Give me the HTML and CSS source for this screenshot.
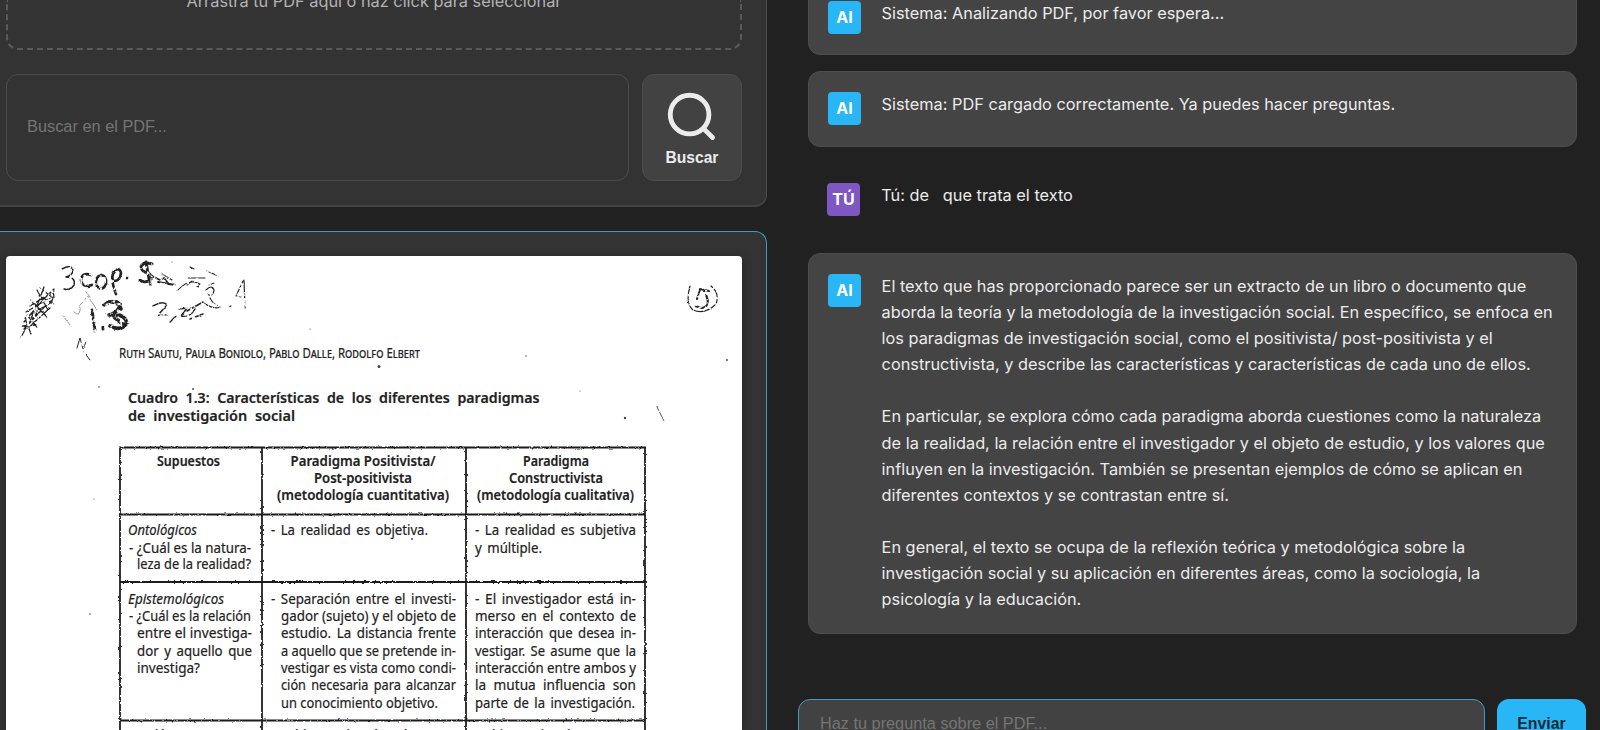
FILE: index.html
```html
<!DOCTYPE html>
<html lang="es">
<head>
<meta charset="utf-8">
<title>Asistente PDF</title>
<link rel="stylesheet" href="styles.css">
</head>
<body>
<div class="app">
  <section class="left">
    <div class="panel tools">
      <div class="dropzone"><p class="drop-text">Arrastra tu PDF aquí o haz click para seleccionar</p></div>
      <div class="search-row">
        <div class="search-input"><span class="search-ph">Buscar en el PDF...</span></div>
        <button class="search-btn">
          <svg class="search-icon" viewBox="0 0 24 24"><circle cx="11" cy="11" r="8"/><path d="M20.5 20.5 16.9 16.9"/></svg>
          <span>Buscar</span>
        </button>
      </div>
    </div>
    <div class="panel viewer">
      <div class="page">
        <svg class="scan" viewBox="6 256 736 474" preserveAspectRatio="xMidYMin slice">
          <defs>
            <filter id="rough" filterUnits="userSpaceOnUse" x="0" y="250" width="750" height="490">
              <feTurbulence type="fractalNoise" baseFrequency="0.35" numOctaves="2" seed="4" result="n"/>
              <feDisplacementMap in="SourceGraphic" in2="n" scale="2.6" xChannelSelector="R" yChannelSelector="G"/>
            </filter>
            <filter id="pencil" filterUnits="userSpaceOnUse" x="0" y="250" width="750" height="490">
              <feTurbulence type="fractalNoise" baseFrequency="0.3" numOctaves="2" seed="9" result="n"/>
              <feDisplacementMap in="SourceGraphic" in2="n" scale="2" xChannelSelector="R" yChannelSelector="G" result="d"/>
              <feColorMatrix in="n" type="matrix" values="0 0 0 0 0  0 0 0 0 0  0 0 0 0 0  0 0 0 6 -1.9" result="m"/>
              <feComposite in="d" in2="m" operator="in"/>
            </filter>
          </defs>
          <g class="table-lines" filter="url(#rough)">
            <path d="M119 447.5H646M120 514.5H645M120 582H645M120 720.5H645"/>
            <path d="M120 447V740M262 447V740M466 447V740M645 447V740"/>
          </g>
          <g class="ink" filter="url(#pencil)">
            <!-- scribble -->
            <path d="M21 337C30 322 38 305 44 287M24 322C34 310 45 297 54 289M25 318L52 302M26 312L50 298M30 306L54 291M22 326L36 325M24 329L48 303M28 328L50 308M27 315L37 327M33 303L44 314M39 296L54 304M37 290L48 310M31 300L47 317M40 288L53 298M52 291Q57 299 49 302M26 321L31 334M30 322L40 309" stroke-width="1.3"/>
            <!-- "3 cop. $" -->
            <path d="M62 269Q71 264 73 270Q73 275 66 277Q76 277 74 285Q70 291 64 289" stroke-width="1.5"/>
            <path d="M91 275Q82 272 81 280Q82 288 92 285M101 275Q95 277 96 285Q102 293 106 284Q107 276 101 275M113 272Q111 283 116 294M113 274Q119 265 121 273Q120 281 114 281M125 278L127 278" stroke-width="2.7"/>
            <path d="M152 264Q143 261 141 267Q142 272 148 273Q155 277 149 281Q143 283 140 280M146 262L150 284" stroke-width="3"/>
            <path d="M152 276L160 280L164 278L168 283M158 282L175 285" stroke-width="1.8"/>
            <!-- "1.3" -->
            <path d="M92 310L95 331M103 327L103 329" stroke-width="3"/>
            <path d="M104 305Q116 298 120 305Q119 312 109 315Q125 313 127 323Q121 332 110 326M108 302Q119 301 121 309M114 317L125 326" stroke-width="3.6"/>
            <path d="M63 316L71 326M74 312Q81 319 80 305L88 296L97 310M102 310L110 318M86 292L91 298" stroke-width=".8" stroke="#777"/>
            <path d="M77 348L80 338L83 349L86 342M84 352L90 360" stroke-width="1"/>
            <!-- prices -->
            <path d="M162 274L172 280M178 290Q189 278 200 284L196 288M188 278L205 278M190 267L194 269M207 271L218 276M209 285L214 283M187 285L192 281" stroke-width="1.1"/>
            <path d="M153 306Q164 300 167 305L158 315L166 315M170 322L176 316M179 309L187 308L181 316Q190 318 195 309M187 311L203 302M190 319L203 314" stroke-width="1.5"/>
            <path d="M206 290Q212 284 214 290Q213 298 207 294M204 303Q214 310 220 307M210 298Q213 304 218 305M229 307L231 306M243 281L236 296L241 297M244 280L245 308" stroke-width="1.2"/>
            <!-- circled folio number -->
            <path d="M700 289L697 299M706 295Q711 306 702 308L695 306M700 289L709 291" stroke-width="2.1"/>
            <path d="M690 286Q685 304 693 310Q705 315 716 304Q720 293 711 286" stroke-width="1.2"/>
            <path d="M657 407L664 421" stroke-width=".8"/>
          </g>
          <g class="specks">
            <circle cx="379" cy="366.500" r="1.500"/><circle cx="310" cy="329" r=".6"/><circle cx="526" cy="356" r=".7"/>
            <circle cx="727" cy="360" r=".9"/><circle cx="625" cy="418" r="1.200"/><circle cx="193" cy="389" r=".9"/>
            <circle cx="99" cy="387" r=".8"/><circle cx="94" cy="499" r=".6"/><circle cx="90" cy="614" r=".8"/>
            <circle cx="412" cy="539" r=".9"/><circle cx="580" cy="391" r=".5"/><circle cx="172" cy="262" r=".6"/>
          </g>
          <g class="scan-text">
            <text class="authors" x="119" y="358" textLength="301" lengthAdjust="spacingAndGlyphs">Ruth Sautu, Paula Boniolo, Pablo Dalle, Rodolfo Elbert</text>
            <text class="title" x="128" y="403.300" textLength="411.500" lengthAdjust="spacingAndGlyphs">Cuadro 1.3: Características de los diferentes paradigmas</text>
            <text class="title" x="128" y="421" textLength="167" lengthAdjust="spacingAndGlyphs">de investigación social</text>
            <g class="head">
              <text x="157" y="465.500" textLength="63" lengthAdjust="spacingAndGlyphs">Supuestos</text>
              <text x="290.500" y="465.500" textLength="145" lengthAdjust="spacingAndGlyphs">Paradigma Positivista/</text>
              <text x="314" y="483" textLength="98" lengthAdjust="spacingAndGlyphs">Post-positivista</text>
              <text x="277" y="500" textLength="172" lengthAdjust="spacingAndGlyphs">(metodología cuantitativa)</text>
              <text x="523" y="465.500" textLength="66" lengthAdjust="spacingAndGlyphs">Paradigma</text>
              <text x="509" y="483" textLength="94" lengthAdjust="spacingAndGlyphs">Constructivista</text>
              <text x="477" y="500" textLength="157" lengthAdjust="spacingAndGlyphs">(metodología cualitativa)</text>
            </g>
            <text class="it" x="128" y="535" textLength="69" lengthAdjust="spacingAndGlyphs">Ontológicos</text>
            <text x="129" y="552.500" textLength="122" lengthAdjust="spacingAndGlyphs">- ¿Cuál es la natura-</text>
            <text x="137" y="569" textLength="114" lengthAdjust="spacingAndGlyphs">leza de la realidad?</text>
            <text class="wide" x="271" y="535" textLength="157" lengthAdjust="spacingAndGlyphs">- La realidad es objetiva.</text>
            <text class="wide" x="475" y="535" textLength="161" lengthAdjust="spacingAndGlyphs">- La realidad es subjetiva</text>
            <text class="wide" x="475" y="552.500" textLength="67" lengthAdjust="spacingAndGlyphs">y múltiple.</text>
            <text class="it" x="128" y="603.500" textLength="96" lengthAdjust="spacingAndGlyphs">Epistemológicos</text>
            <text x="129" y="620.500" textLength="122" lengthAdjust="spacingAndGlyphs">- ¿Cuál es la relación</text>
            <text x="137" y="638" textLength="115" lengthAdjust="spacingAndGlyphs">entre el investiga-</text>
            <text class="wide" x="137" y="655.500" textLength="115" lengthAdjust="spacingAndGlyphs">dor y aquello que</text>
            <text x="137" y="673" textLength="63" lengthAdjust="spacingAndGlyphs">investiga?</text>
            <text class="wide" x="271" y="603.500" textLength="185" lengthAdjust="spacingAndGlyphs">- Separación entre el investi-</text>
            <text x="281" y="620.500" textLength="175" lengthAdjust="spacingAndGlyphs">gador (sujeto) y el objeto de</text>
            <text class="wide" x="281" y="638" textLength="175" lengthAdjust="spacingAndGlyphs">estudio. La distancia frente</text>
            <text x="281" y="655.500" textLength="175" lengthAdjust="spacingAndGlyphs">a aquello que se pretende in-</text>
            <text x="281" y="673" textLength="175" lengthAdjust="spacingAndGlyphs">vestigar es vista como condi-</text>
            <text class="wide" x="281" y="690" textLength="175" lengthAdjust="spacingAndGlyphs">ción necesaria para alcanzar</text>
            <text x="281" y="707.500" textLength="157" lengthAdjust="spacingAndGlyphs">un conocimiento objetivo.</text>
            <text class="wide" x="475" y="603.500" textLength="161" lengthAdjust="spacingAndGlyphs">- El investigador está in-</text>
            <text class="wide" x="475" y="620.500" textLength="161" lengthAdjust="spacingAndGlyphs">merso en el contexto de</text>
            <text class="wide" x="475" y="638" textLength="161" lengthAdjust="spacingAndGlyphs">interacción que desea in-</text>
            <text class="wide" x="475" y="655.500" textLength="161" lengthAdjust="spacingAndGlyphs">vestigar. Se asume que la</text>
            <text x="475" y="673" textLength="161" lengthAdjust="spacingAndGlyphs">interacción entre ambos y</text>
            <text class="wider" x="475" y="690" textLength="161" lengthAdjust="spacingAndGlyphs">la mutua influencia son</text>
            <text class="wide" x="475" y="707.500" textLength="160" lengthAdjust="spacingAndGlyphs">parte de la investigación.</text>
            <text class="it" x="128" y="740" textLength="68" lengthAdjust="spacingAndGlyphs">Axiológicos</text>
            <text x="277" y="740" textLength="178" lengthAdjust="spacingAndGlyphs">- El investigador descree</text>
            <text x="475" y="740" textLength="161" lengthAdjust="spacingAndGlyphs">- El investigador asume</text>
          </g>
        </svg>
      </div>
    </div>
  </section>
  <section class="right">
    <div class="messages">
      <article class="msg ai first"><span class="avatar">AI</span><p>Sistema: Analizando PDF, por favor espera...</p></article>
      <article class="msg ai"><span class="avatar">AI</span><p>Sistema: PDF cargado correctamente. Ya puedes hacer preguntas.</p></article>
      <article class="msg user"><span class="avatar">TÚ</span><p>Tú: de   que trata el texto</p></article>
      <article class="msg ai answer"><span class="avatar">AI</span><p>El texto que has proporcionado parece ser un extracto de un libro o documento que
aborda la teoría y la metodología de la investigación social. En específico, se enfoca en
los paradigmas de investigación social, como el positivista/ post-positivista y el
constructivista, y describe las características y características de cada uno de ellos.

En particular, se explora cómo cada paradigma aborda cuestiones como la naturaleza
de la realidad, la relación entre el investigador y el objeto de estudio, y los valores que
influyen en la investigación. También se presentan ejemplos de cómo se aplican en
diferentes contextos y se contrastan entre sí.

En general, el texto se ocupa de la reflexión teórica y metodológica sobre la
investigación social y su aplicación en diferentes áreas, como la sociología, la
psicología y la educación.</p></article>
    </div>
    <div class="composer">
      <div class="ask-input"><span class="ask-ph">Haz tu pregunta sobre el PDF...</span></div>
      <button class="send">Enviar</button>
    </div>
  </section>
</div>
</body>
</html>
```
FILE: styles.css
```css
* { box-sizing: border-box; }
body { margin: 0; background: #212121; color: #ececec; font-family: Inter, "Liberation Sans", sans-serif; font-size: 16.32px; overflow: hidden; }
p { margin: 0; }
button { font-family: "Liberation Sans", Arial, sans-serif; padding: 0; }
.app { display: flex; height: 730px; overflow: hidden; }
.left { flex: none; width: 767px; display: flex; flex-direction: column; gap: 24px; }
.panel { background: #333; border: 1px solid #4d4d4d; border-left: 0; padding: 0 24px 24px 6px; }
.tools { height: 207px; flex: none; border-top: 0; border-bottom-width: 2px; border-bottom-color: #424242; border-radius: 0 0 12px 0; display: flex; flex-direction: column; gap: 24px; }
.dropzone { height: 50px; border: 2px dashed #5a5a5a; border-top: 0; border-radius: 0 0 12px 12px; display: flex; justify-content: center; }
.drop-text { margin-top: -12px; height: 27px; line-height: 27px; color: #b4b4b4; white-space: nowrap; }
.search-row { display: flex; gap: 13px; height: 107px; }
.search-input { flex: 1; border: 1px solid #4d4d4d; border-radius: 12px; padding: 0 20px 2px; display: flex; align-items: center; color: #757575; font-family: "Liberation Sans", Arial, sans-serif; font-size: 16.35px; }
.search-btn { width: 100px; border: 1px solid #4d4d4d; border-radius: 12px; background: #424242; color: #ececec; display: flex; flex-direction: column; align-items: center; padding-top: 13px; gap: 3px; font-size: 15.6px; font-weight: 700; line-height: 18px; }
.search-icon { width: 58px; height: 58px; fill: none; stroke: #ececec; stroke-width: 2; stroke-linecap: round; }
.viewer { flex: 1; min-height: 0; border-color: #3b9cc8; border-bottom: 0; border-radius: 0 12px 0 0; padding-top: 24px; padding-bottom: 0; }
.page { height: 100%; background: #fff; border-radius: 4px 4px 0 0; overflow: hidden; box-shadow: 0 2px 10px rgba(0, 0, 0, .3); }
.scan { display: block; width: 736px; height: 474px; }
.table-lines { fill: none; stroke: #1c1c1c; stroke-width: 1.8; }
.ink { fill: none; stroke: #222; stroke-linecap: round; stroke-linejoin: round; }
.specks { fill: #444; }
.scan-text { font-family: "Noto Sans", "Open Sans", sans-serif; font-size: 14px; fill: #222; stroke: #222; stroke-width: .2px; }
.authors { font-variant: small-caps; font-size: 14px; }
.title { font-weight: 600; font-size: 14.5px; word-spacing: 4px; }
.head { font-weight: 600; font-size: 14.5px; }
.it { font-style: italic; }
.wide { word-spacing: 2.2px; }
.wider { word-spacing: 4px; }
.right { flex: 1; min-width: 0; padding: 0 14px 0 31px; display: flex; flex-direction: column; }
.messages { height: 699px; flex: none; padding: 0 9px 0 10px; display: flex; flex-direction: column; }
.msg { flex: none; display: flex; gap: 20px; border: 1px solid transparent; border-radius: 12px; padding: 20px 19px; }
.msg p { line-height: 26.1px; white-space: pre; height: 26px; margin: -1px 0 0 .6px; }
.ai { background: #444; border-color: #4d4d4d; height: 76px; }
.first { height: 75px; margin-top: -20px; margin-bottom: 16px; }
.user { height: 76px; margin: 15px 0; padding-left: 18px; }
.user p { margin-left: 1.3px; }
.answer { height: 381px; }
.avatar { flex: none; width: 33px; height: 33px; border-radius: 4px; background: #29b6f6; color: #fff; display: flex; align-items: center; justify-content: center; font-weight: 700; font-size: 16px; padding-bottom: 2px; }
.user .avatar { background: #7e57c2; }
.composer { display: flex; gap: 12px; height: 60px; flex: none; }
.ask-input { flex: 1; height: 60px; background: #424242; border: 1px solid #3b9cc8; border-radius: 12px; padding: 11px 21px; color: #757575; line-height: 24px; font-family: "Liberation Sans", Arial, sans-serif; font-size: 16.3px; }
.send { width: 89px; height: 60px; border: 0; border-radius: 12px; background: #29b6f6; color: #1a2a33; font-size: 15.9px; font-weight: 700; line-height: 20px; padding-bottom: 11px; }
```
